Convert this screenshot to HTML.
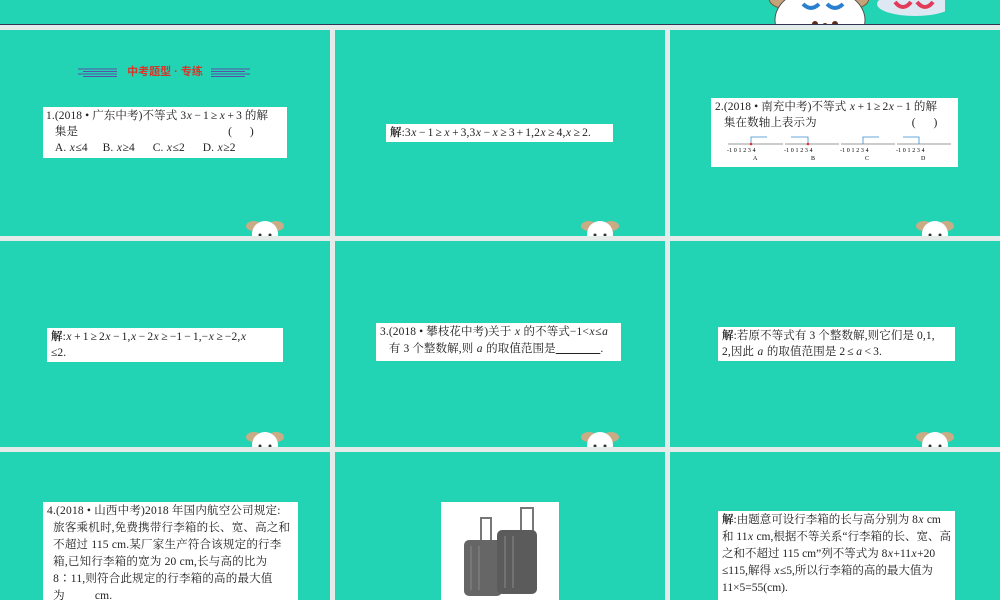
<!DOCTYPE html><html><head><meta charset="utf-8"><style>
*{margin:0;padding:0;box-sizing:border-box}
html,body{width:1000px;height:600px;overflow:hidden}
body{background:#e3ece9;position:relative;font-family:"Liberation Serif","Noto Serif CJK SC",serif;color:#222}
.p{position:absolute;background:#22d4b4;overflow:hidden}
.b{position:absolute;background:#fff;font-size:11.5px;line-height:16.5px;padding:1px 4px;white-space:nowrap;overflow:hidden;letter-spacing:.1px}
.b i{font-style:italic;margin:0 .5px}
.o{margin:0 2px}
.dog{position:absolute;width:40px;height:22px}
</style></head><body>
<div class="p" style="left:0;top:0;width:1000px;height:25px;border-bottom:1px solid #335">
 <svg style="position:absolute;left:745px;top:-20px" width="200" height="46">
  <ellipse cx="38" cy="18" rx="14" ry="10" fill="#c4a27a" stroke="#7a5a3a"/>
  <ellipse cx="110" cy="18" rx="14" ry="10" fill="#c4a27a" stroke="#7a5a3a"/>
  <ellipse cx="75" cy="40" rx="45" ry="32" fill="#fff" stroke="#555"/>
  <path d="M58 24 q8 8 16 0 M82 24 q8 8 16 0" stroke="#2a7fd0" stroke-width="4" fill="none"/>
  <circle cx="70" cy="44" r="3" fill="#5a2a1a"/><circle cx="90" cy="44" r="3" fill="#5a2a1a"/><circle cx="80" cy="46" r="3" fill="#5a2a1a"/>
  <ellipse cx="170" cy="24" rx="38" ry="12" fill="#dde8f3"/>
  <path d="M150 22 q8 10 16 0 M172 22 q8 10 16 0" stroke="#e23b5a" stroke-width="4" fill="none"/>
 </svg>
</div>
<div class="p" style="left:0;top:30px;width:330px;height:206px"></div>
<div class="p" style="left:335px;top:30px;width:330px;height:206px"></div>
<div class="p" style="left:670px;top:30px;width:330px;height:206px"></div>
<div class="p" style="left:0;top:241px;width:330px;height:206px"></div>
<div class="p" style="left:335px;top:241px;width:330px;height:206px"></div>
<div class="p" style="left:670px;top:241px;width:330px;height:206px"></div>
<div class="p" style="left:0;top:452px;width:330px;height:148px"></div>
<div class="p" style="left:335px;top:452px;width:330px;height:148px"></div>
<div class="p" style="left:670px;top:452px;width:330px;height:148px"></div>
<svg class="dog" style="left:245px;top:214px" viewBox="0 0 40 22"><ellipse cx="9" cy="12" rx="8" ry="5" fill="#c9ab86"/><ellipse cx="31" cy="12" rx="8" ry="5" fill="#c9ab86"/><ellipse cx="20" cy="20" rx="13" ry="13" fill="#fff"/><circle cx="15" cy="21" r="1.5" fill="#333"/><circle cx="25" cy="21" r="1.5" fill="#333"/></svg>
<svg class="dog" style="left:580px;top:214px" viewBox="0 0 40 22"><ellipse cx="9" cy="12" rx="8" ry="5" fill="#c9ab86"/><ellipse cx="31" cy="12" rx="8" ry="5" fill="#c9ab86"/><ellipse cx="20" cy="20" rx="13" ry="13" fill="#fff"/><circle cx="15" cy="21" r="1.5" fill="#333"/><circle cx="25" cy="21" r="1.5" fill="#333"/></svg>
<svg class="dog" style="left:915px;top:214px" viewBox="0 0 40 22"><ellipse cx="9" cy="12" rx="8" ry="5" fill="#c9ab86"/><ellipse cx="31" cy="12" rx="8" ry="5" fill="#c9ab86"/><ellipse cx="20" cy="20" rx="13" ry="13" fill="#fff"/><circle cx="15" cy="21" r="1.5" fill="#333"/><circle cx="25" cy="21" r="1.5" fill="#333"/></svg>
<svg class="dog" style="left:245px;top:425px" viewBox="0 0 40 22"><ellipse cx="9" cy="12" rx="8" ry="5" fill="#c9ab86"/><ellipse cx="31" cy="12" rx="8" ry="5" fill="#c9ab86"/><ellipse cx="20" cy="20" rx="13" ry="13" fill="#fff"/><circle cx="15" cy="21" r="1.5" fill="#333"/><circle cx="25" cy="21" r="1.5" fill="#333"/></svg>
<svg class="dog" style="left:580px;top:425px" viewBox="0 0 40 22"><ellipse cx="9" cy="12" rx="8" ry="5" fill="#c9ab86"/><ellipse cx="31" cy="12" rx="8" ry="5" fill="#c9ab86"/><ellipse cx="20" cy="20" rx="13" ry="13" fill="#fff"/><circle cx="15" cy="21" r="1.5" fill="#333"/><circle cx="25" cy="21" r="1.5" fill="#333"/></svg>
<svg class="dog" style="left:915px;top:425px" viewBox="0 0 40 22"><ellipse cx="9" cy="12" rx="8" ry="5" fill="#c9ab86"/><ellipse cx="31" cy="12" rx="8" ry="5" fill="#c9ab86"/><ellipse cx="20" cy="20" rx="13" ry="13" fill="#fff"/><circle cx="15" cy="21" r="1.5" fill="#333"/><circle cx="25" cy="21" r="1.5" fill="#333"/></svg>
<svg style="position:absolute;left:75px;top:66px" width="180" height="12">
 <g stroke="#5a4fa8" stroke-width="1"><path d="M3 3H42M8 5.5H42M3 8H42M8 10.5H42"/><path d="M136 3H175M136 5.5H170M136 8H175M136 10.5H170"/></g>
</svg>
<div style="position:absolute;left:115px;top:63px;width:100px;text-align:center;font:bold 11px 'Liberation Sans','Noto Sans CJK SC',sans-serif;color:#d8342a">中考题型 · 专练</div>
<div class="b" style="left:43px;top:107px;width:244px;height:51px;padding:1px 3px;line-height:16px">1.(2018 • 广东中考)不等式 3<i>x</i><span class="o">−</span>1<span class="o">≥</span><i>x</i><span class="o">+</span>3 的解<br>&nbsp;&nbsp;&nbsp;集是<span style="margin-left:150px">(&nbsp;&nbsp;&nbsp;&nbsp;&nbsp;&nbsp;)</span><br>&nbsp;&nbsp;&nbsp;A. <i>x</i>≤4&nbsp;&nbsp;&nbsp;&nbsp;&nbsp;B. <i>x</i>≥4&nbsp;&nbsp;&nbsp;&nbsp;&nbsp;&nbsp;C. <i>x</i>≤2&nbsp;&nbsp;&nbsp;&nbsp;&nbsp;&nbsp;D. <i>x</i>≥2</div>
<div class="b" style="left:386px;top:124px;width:227px;height:18px;line-height:16px"><b>解</b>:3<i>x</i><span class="o">−</span>1<span class="o">≥</span><i>x</i><span class="o">+</span>3,3<i>x</i><span class="o">−</span><i>x</i><span class="o">≥</span>3<span class="o">+</span>1,2<i>x</i><span class="o">≥</span>4,<i>x</i><span class="o">≥</span>2.</div>
<div class="b" style="left:711px;top:98px;width:247px;height:69px;line-height:16px">2.(2018 • 南充中考)不等式 <i>x</i><span class="o">+</span>1<span class="o">≥</span>2<i>x</i><span class="o">−</span>1 的解<br>&nbsp;&nbsp;&nbsp;集在数轴上表示为<span style="margin-left:95px">(&nbsp;&nbsp;&nbsp;&nbsp;&nbsp;&nbsp;)</span>
 <svg style="position:absolute;left:0;top:36px" width="247" height="30" font-size="6" font-family="Liberation Serif">
  <g stroke="#333" stroke-width=".6"><path d="M17 10H72M74 10H128M130 10H184M186 10H240"/></g>
  <g stroke="#3a8fd0" stroke-width=".8" fill="none"><path d="M40 10V3H56M97 10V3H80M152 10V3H168M208 10V3H192"/></g>
  <g fill="#d33"><circle cx="40" cy="10" r="1.3"/><circle cx="97" cy="10" r="1.3"/></g>
  <text x="16" y="18">-1 0 1 2 3 4</text><text x="73" y="18">-1 0 1 2 3 4</text><text x="129" y="18">-1 0 1 2 3 4</text><text x="185" y="18">-1 0 1 2 3 4</text>
  <text x="42" y="26">A</text><text x="100" y="26">B</text><text x="154" y="26">C</text><text x="210" y="26">D</text>
 </svg></div>
<div class="b" style="left:47px;top:328px;width:236px;height:34px;line-height:16px"><b>解</b>:<i>x</i><span class="o">+</span>1<span class="o">≥</span>2<i>x</i><span class="o">−</span>1,<i>x</i><span class="o">−</span>2<i>x</i><span class="o">≥</span>−1<span class="o">−</span>1,−<i>x</i><span class="o">≥</span>−2,<i>x</i><br>≤2.</div>
<div class="b" style="left:376px;top:323px;width:245px;height:38px;line-height:17px">3.(2018 • 攀枝花中考)关于 <i>x</i> 的不等式−1&lt;<i>x</i>≤<i>a</i><br>&nbsp;&nbsp;&nbsp;有 3 个整数解,则 <i>a</i> 的取值范围是<u>&nbsp;&nbsp;&nbsp;&nbsp;&nbsp;&nbsp;&nbsp;&nbsp;&nbsp;&nbsp;&nbsp;&nbsp;&nbsp;&nbsp;&nbsp;</u>.</div>
<div class="b" style="left:718px;top:327px;width:237px;height:34px;line-height:16px"><b>解</b>:若原不等式有 3 个整数解,则它们是 0,1,<br>2,因此 <i>a</i> 的取值范围是 2<span class="o">≤</span><i>a</i><span class="o">&lt;</span>3.</div>
<div class="b" style="left:43px;top:502px;width:255px;height:98px;line-height:17px;letter-spacing:.2px">4.(2018 • 山西中考)2018 年国内航空公司规定:<br>&nbsp;&nbsp;旅客乘机时,免费携带行李箱的长、宽、高之和<br>&nbsp;&nbsp;不超过 115 cm.某厂家生产符合该规定的行李<br>&nbsp;&nbsp;箱,已知行李箱的宽为 20 cm,长与高的比为<br>&nbsp;&nbsp;8∶11,则符合此规定的行李箱的高的最大值<br>&nbsp;&nbsp;为<span style="margin-left:30px">cm.</span></div>
<div style="position:absolute;left:441px;top:502px;width:118px;height:98px;background:#fff">
 <svg width="118" height="98">
  <path d="M40 40V16h10v24M80 30V6h12v24" stroke="#777" stroke-width="2" fill="none"/>
  <rect x="23" y="38" width="38" height="56" rx="5" fill="#666"/>
  <rect x="56" y="28" width="40" height="64" rx="5" fill="#5b5b5b"/>
  <g stroke="#888" stroke-width="1"><path d="M30 44V88M38 44V88M64 34V86M72 34V86"/></g>
 </svg>
</div>
<div class="b" style="left:718px;top:511px;width:237px;height:89px;line-height:17px;letter-spacing:0">
<b>解</b>:由题意可设行李箱的长与高分别为 8<i>x</i> cm<br>和 11<i>x</i> cm,根据不等关系“行李箱的长、宽、高<br>之和不超过 115 cm”列不等式为 8<i>x</i>+11<i>x</i>+20<br>≤115,解得 <i>x</i>≤5,所以行李箱的高的最大值为<br>11×5=55(cm).</div>
</body></html>
